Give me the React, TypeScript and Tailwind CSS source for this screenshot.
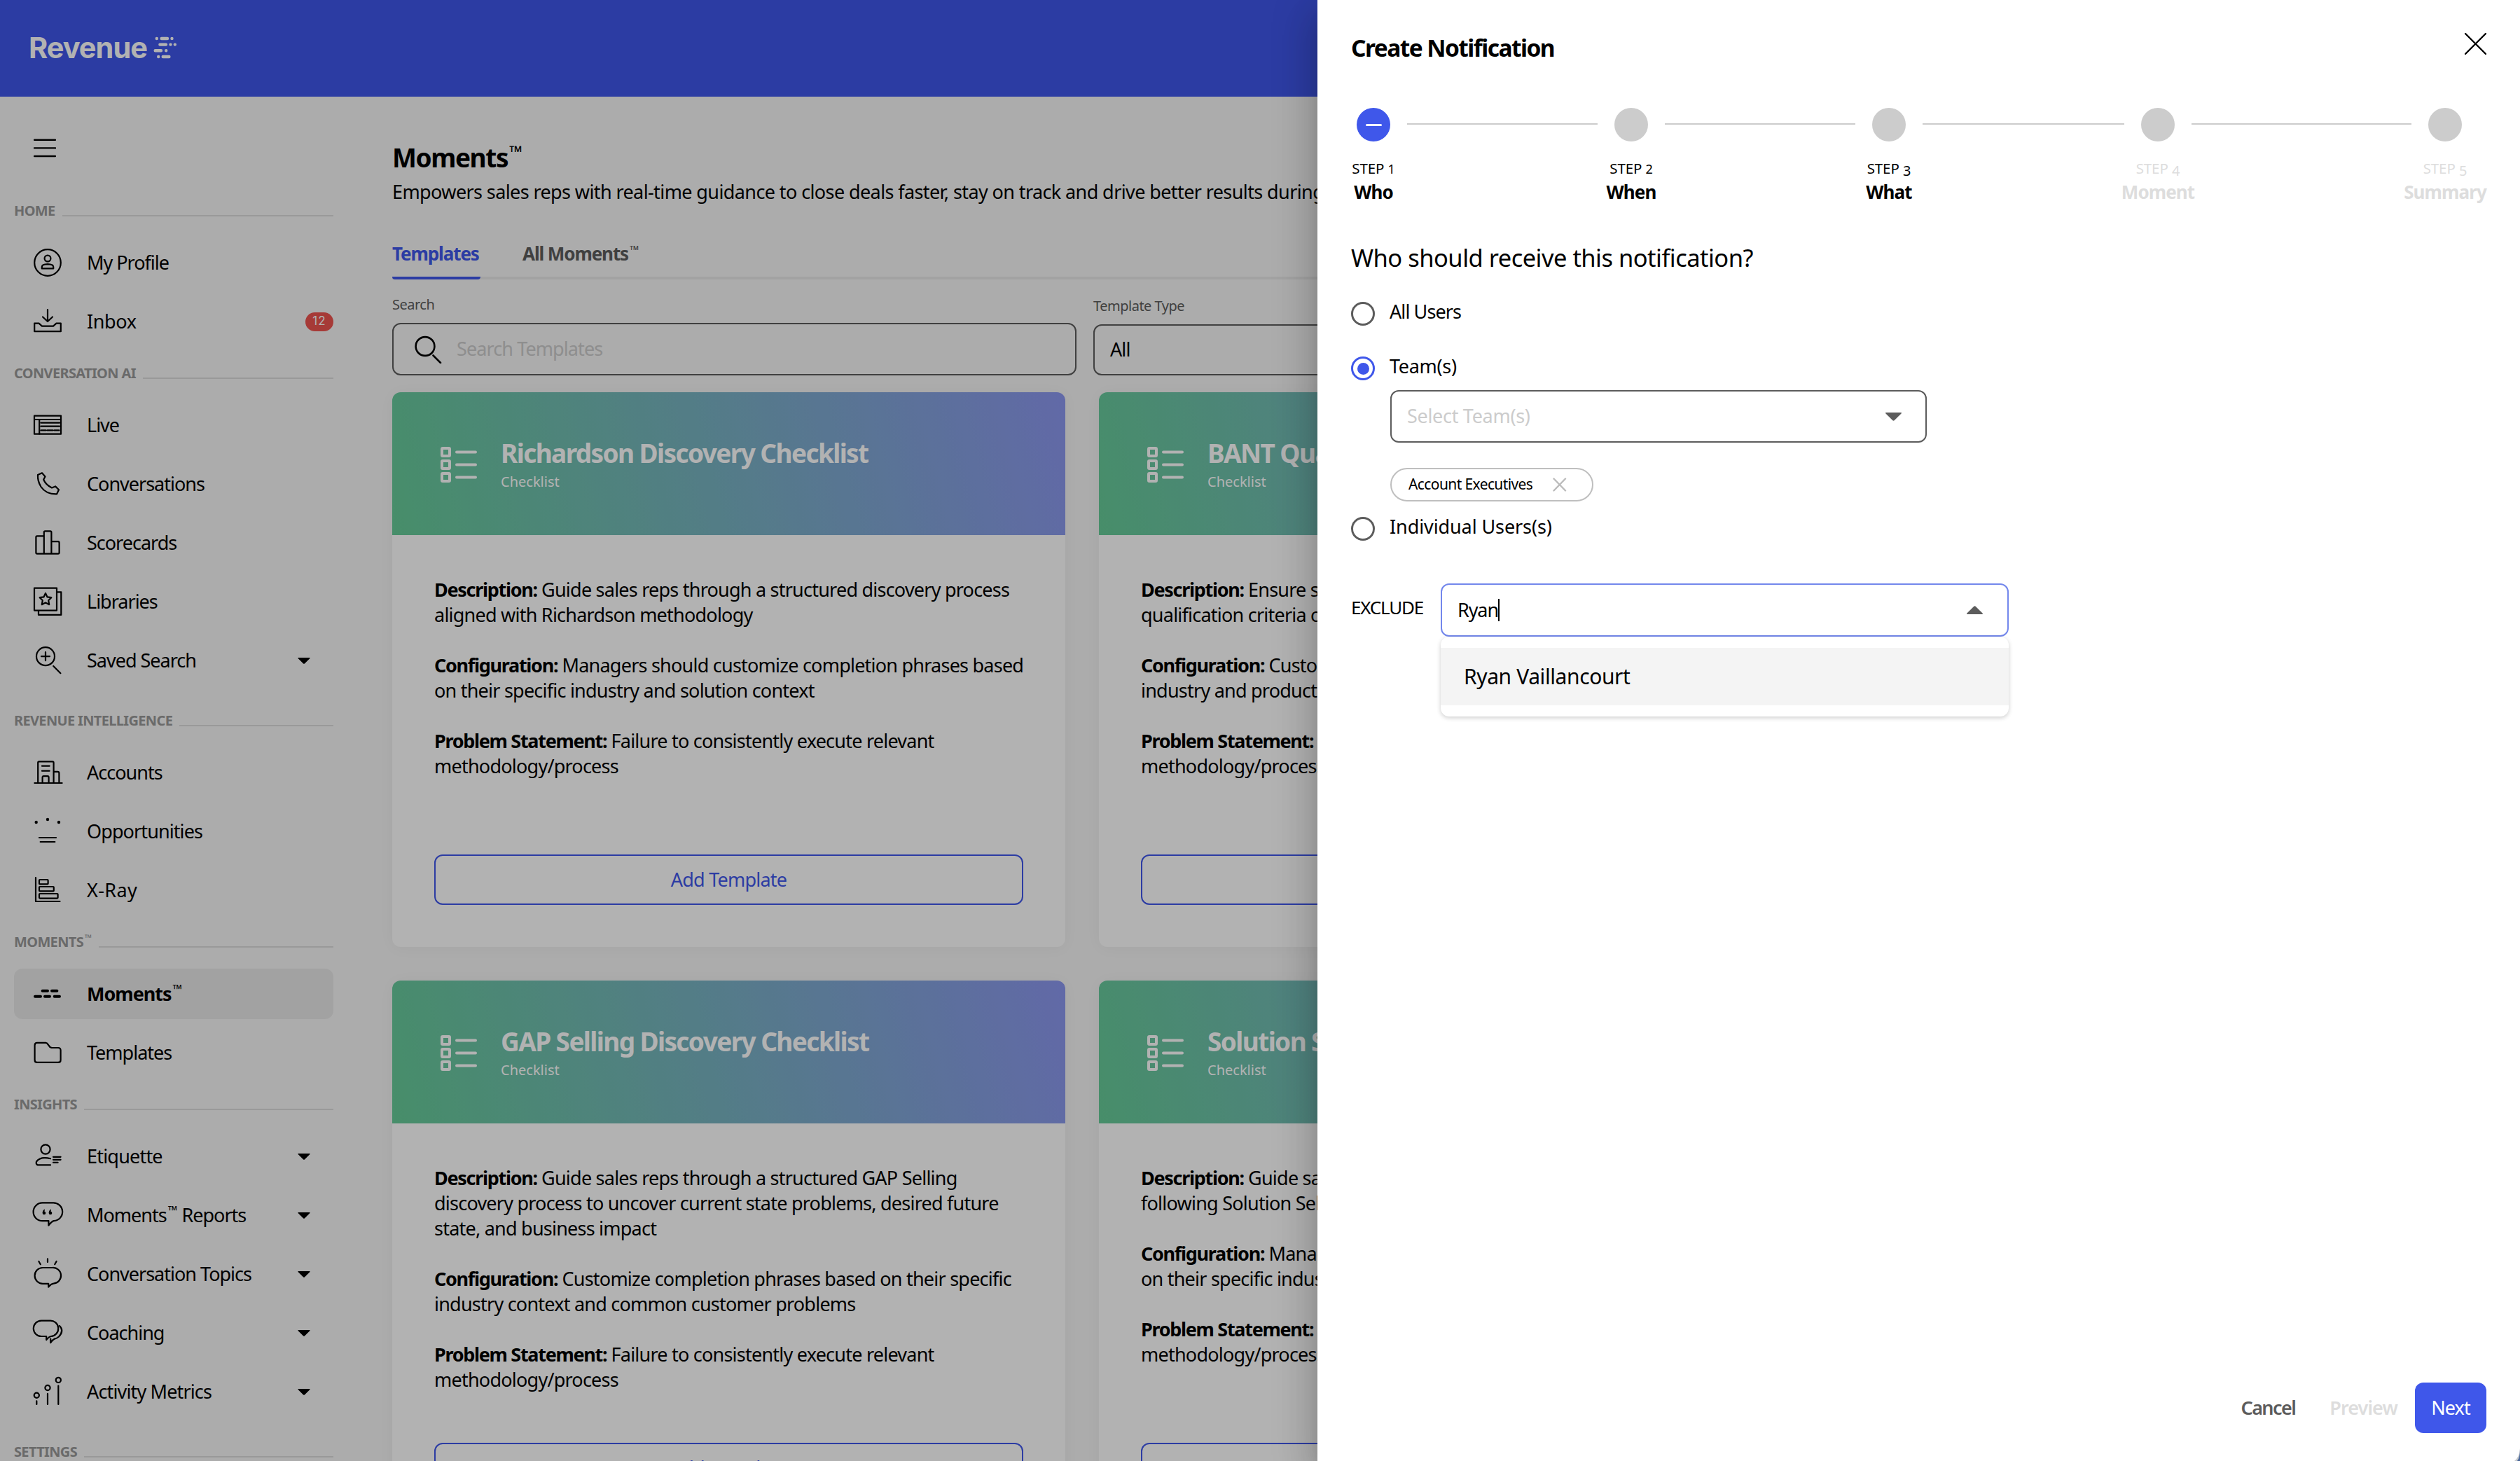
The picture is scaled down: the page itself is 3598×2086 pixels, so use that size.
import React from "react";
import clsx from "clsx";

interface NavEntry {
  label: string;
  icon: React.ReactNode;
  tm?: string;
  badge?: string;
  active?: boolean;
  expandable?: boolean;
  tracking?: string;
}

interface NavSection {
  title: string;
  tm?: boolean;
  items: NavEntry[];
}

const icons = {
  profile: (
    <>
      <circle cx="20" cy="20" r="18.8" />
      <circle cx="20" cy="14" r="4.4" />
      <path d="M11.8 28.4V26Q12 22.4 20 22.2Q28 22.4 28.2 26V28.4Z" />
    </>
  ),
  inbox: (
    <>
      <path d="M20 3V19.5M13 13.5L20 20L27 13.5" />
      <path d="M1.2 22.6H7.5L12 26.6H28L32.5 22.6H38.8V34.2H1.2Z" />
    </>
  ),
  live: (
    <>
      <rect x="1" y="6.7" width="38" height="26" />
      <path d="M1 12H39M8.2 12V32.5M10.5 16.7H37M10.5 21.7H37M10.5 27.4H17.5M19.5 27.4H27.5M29.5 27.4H36.5" />
    </>
  ),
  phone: <path d="M6 7L12 4.3L16.5 9.5L14.2 13.8Q17.5 21.5 26 25.4L31 23.4L36 28.2L33 34.4Q18 35 10.5 24Q5.5 16 6 7Z" />,
  scorecards: (
    <path d="M14.8 10.4H5Q3.4 10.4 3.4 12V34Q3.4 35.6 5 35.6H35Q36.6 35.6 36.6 34V20Q36.6 18.2 35 18.2H25.4M14.8 35.6V5Q14.8 3.3 16.4 3.3H23.8Q25.4 3.3 25.4 5V35.6" />
  ),
  libraries: (
    <>
      <rect x="1" y="0.6" width="32" height="32" />
      <path d="M33 6.3H39.3V38.9H7V33" />
      <path d="M17 8L19.6 13.4L25.3 14.2L21.2 18.3L22.2 24.2L17 21.4L11.8 24.2L12.8 18.3L8.7 14.2L14.4 13.4Z" />
    </>
  ),
  savedSearch: (
    <>
      <circle cx="17" cy="14.2" r="13" />
      <path d="M17 8.2V20.2M11 14.2H23M28.2 28L38.4 38.2" />
    </>
  ),
  accounts: (
    <path d="M6.2 35V6Q6.2 4.4 7.8 4.4H27Q28.6 4.4 28.6 6V35M28.6 18.8H34.4Q36.4 18.8 36.4 20.8V35M1.4 35H40.6M12 10.7H22.6M12 17.7H22.6M12.6 35V27Q12.6 25.2 14.4 25.2H20Q21.6 25.2 21.6 27V35" />
  ),
  opportunities: (
    <>
      <g fill="currentColor" stroke="none">
        <circle cx="3.7" cy="7" r="2.2" />
        <circle cx="20" cy="3" r="2.2" />
        <circle cx="36" cy="7" r="2.2" />
      </g>
      <path d="M8 29H32M9.7 35H30.3" />
    </>
  ),
  xray: (
    <>
      <path d="M3 2V36H37.5" />
      <rect x="8" y="5" width="12.6" height="6.4" rx="1" />
      <rect x="8" y="15" width="20.8" height="6.4" rx="1" />
      <rect x="8" y="25" width="26.6" height="6.6" rx="1" />
    </>
  ),
  moments: <path strokeWidth="4" d="M12.6 15.7H20M26 15.7H33.4M2 23.7H10M16 23.7H23M29.7 23.7H37" />,
  folder: <path d="M5 5.9H17.6L19.4 6.8L23.4 12L25.6 13H35Q38.6 13 38.6 16.6V30.4Q38.6 33.9 35 33.9H5Q1.6 33.9 1.6 30.4V9.4Q1.6 5.9 5 5.9Z" />,
  etiquette: (
    <>
      <circle cx="17" cy="10" r="6.6" />
      <path d="M24 23.2Q10 19.5 4 27.5Q3 31 5.5 32.4H24M28 20.8H38.6M28 24.8H38.6M28 28.8H34.6" />
    </>
  ),
  reports: (
    <>
      <path d="M12.5 2.4H27.5A12.8 12.8 0 0 1 29 28.2Q26 28.6 21.4 34.6V28.2H12.5A12.8 12.8 0 0 1 12.5 2.4Z" />
      <g fill="currentColor" stroke="none">
        <circle cx="15" cy="17" r="2.3" />
        <circle cx="24" cy="17" r="2.3" />
        <path d="M12.7 17Q12.7 12.8 16 11.4L15.4 15.5ZM21.7 17Q21.7 12.8 25 11.4L24.4 15.5Z" />
      </g>
    </>
  ),
  topics: (
    <path d="M13 11H27A11.3 11.3 0 0 1 28.5 33.6Q25 34 21.2 38.6V33.8H13A11.4 11.4 0 0 1 13 11ZM20 -1.6V3M7.4 2L9.8 6.2M32.6 2L30.2 6.2" />
  ),
  coaching: (
    <path d="M11 2.6H23A11.2 11.2 0 0 1 25 25Q22 25.4 18.2 30V25H11A11.2 11.2 0 0 1 11 2.6ZM37 10Q44 17 36 25.5Q33 28 30 28.6Q27 30 24.2 34V28.5" />
  ),
  metrics: (
    <>
      <circle cx="4.3" cy="25.3" r="3.6" />
      <circle cx="20" cy="14.5" r="3.6" />
      <circle cx="35.3" cy="3.4" r="3.6" />
      <path d="M4.3 33.4V38M20 22.8V38M35.3 11.6V38" />
    </>
  ),
};

const sections: NavSection[] = [
  {
    title: "HOME",
    items: [
      { label: "My Profile", icon: icons.profile },
      { label: "Inbox", icon: icons.inbox, badge: "12", tracking: "tracking-[-0.4px]" },
    ],
  },
  {
    title: "CONVERSATION AI",
    items: [
      { label: "Live", icon: icons.live },
      { label: "Conversations", icon: icons.phone },
      { label: "Scorecards", icon: icons.scorecards },
      { label: "Libraries", icon: icons.libraries },
      { label: "Saved Search", icon: icons.savedSearch, expandable: true },
    ],
  },
  {
    title: "REVENUE INTELLIGENCE",
    items: [
      { label: "Accounts", icon: icons.accounts },
      { label: "Opportunities", icon: icons.opportunities, tracking: "tracking-[-0.9px]" },
      { label: "X-Ray", icon: icons.xray, tracking: "tracking-[0.4px]" },
    ],
  },
  {
    title: "MOMENTS",
    tm: true,
    items: [
      { label: "Moments", tm: "", icon: icons.moments, active: true },
      { label: "Templates", icon: icons.folder },
    ],
  },
  {
    title: "INSIGHTS",
    items: [
      { label: "Etiquette", icon: icons.etiquette, expandable: true, tracking: "tracking-[-0.8px]" },
      { label: "Moments", tm: " Reports", icon: icons.reports, expandable: true },
      { label: "Conversation Topics", icon: icons.topics, expandable: true },
      { label: "Coaching", icon: icons.coaching, expandable: true },
      { label: "Activity Metrics", icon: icons.metrics, expandable: true, tracking: "tracking-[-0.85px]" },
    ],
  },
  { title: "SETTINGS", items: [] },
];

const templates = [
  {
    title: "Richardson Discovery Checklist",
    description: ["Guide sales reps through a structured discovery process", "aligned with Richardson methodology"],
    configuration: ["Managers should customize completion phrases based", "on their specific industry and solution context"],
  },
  {
    title: "BANT Qualification Checklist",
    description: ["Ensure sales reps uncover key", "qualification criteria on every call"],
    configuration: ["Customize completion phrases for", "industry and product context"],
  },
  {
    title: "GAP Selling Discovery Checklist",
    description: [
      "Guide sales reps through a structured GAP Selling",
      "discovery process to uncover current state problems, desired future",
      "state, and business impact",
    ],
    configuration: ["Customize completion phrases based on their specific", "industry context and common customer problems"],
  },
  {
    title: "Solution Selling Checklist",
    description: ["Guide sales reps through discovery", "following Solution Selling methodology"],
    configuration: ["Managers should customize phrases", "on their specific industry context"],
  },
];

const problem = ["Failure to consistently execute relevant", "methodology/process"];

function Tm() {
  return <span className="ml-[2px] text-[0.66em] leading-[0] align-[0.55em] tracking-normal">™</span>;
}

function Caret({ className }: { className?: string }) {
  return (
    <svg className={className} viewBox="0 0 20 10" fill="currentColor">
      <path d="M1 0H19Q20 0.4 19.4 1L11 9.4Q10 10 9 9.4L0.6 1Q0 0.4 1 0Z" />
    </svg>
  );
}

function NavRow({ item }: { item: NavEntry }) {
  return (
    <div
      className={clsx(
        "flex h-[72px] items-center rounded-xl pl-7 text-[27px]",
        item.tracking ?? "tracking-[-1px]",
        item.active && "bg-[#e9e9e9] font-bold",
      )}
    >
      <svg
        className="mr-9 h-10 w-10 shrink-0 overflow-visible"
        viewBox="0 0 40 40"
        fill="none"
        stroke="currentColor"
        strokeWidth="2.2"
        strokeLinecap="round"
        strokeLinejoin="round"
      >
        {item.icon}
      </svg>
      <span className="whitespace-pre">
        {item.label}
        {item.tm !== undefined && <Tm />}
        {item.tm}
      </span>
      {item.badge && (
        <span className="ml-auto flex h-[27px] w-10 items-center justify-center rounded-full bg-[#ee5350] font-['Inter',sans-serif] text-[17px] tracking-[1.2px] text-white">
          {item.badge}
        </span>
      )}
      {item.expandable && <Caret className="mr-[32px] ml-auto h-[9px] w-5" />}
    </div>
  );
}

function Sidebar() {
  return (
    <aside className="w-[496px] shrink-0 px-5 pt-[60px]">
      <svg className="ml-7 block h-7 w-8" viewBox="0 0 32 28" stroke="#000" strokeWidth="2.4" strokeLinecap="round">
        <path d="M1 1.8H31M1 13.4H31M1 25H31" />
      </svg>
      <div className="pt-[37px]">
        {sections.map((section) => (
          <div key={section.title} className="pt-[23.5px]">
            <div className="mb-[24.5px] flex h-7 items-center">
              <span className="text-[20px] font-bold tracking-[-0.65px] whitespace-nowrap text-[#999]">
                {section.title}
                {section.tm && <Tm />}
              </span>
              <div className="ml-[10px] h-[2px] flex-1 translate-y-[7px] bg-[#dcdcdc]" />
            </div>
            <div className={clsx("flex flex-col gap-3", section.items.some((i) => i.expandable) && "pb-3")}>
              {section.items.map((item) => (
                <NavRow key={item.label + (item.tm ?? "")} item={item} />
              ))}
            </div>
          </div>
        ))}
      </div>
    </aside>
  );
}

function Section({ name, lines }: { name: string; lines: string[] }) {
  return (
    <div className="mb-9">
      <span className="font-bold tracking-[-1.3px]">{name}:</span>{" "}
      {lines.map((line, idx) => (
        <React.Fragment key={idx}>
          {idx > 0 && <br />}
          {line}
        </React.Fragment>
      ))}
    </div>
  );
}

function TemplateCard({ template }: { template: (typeof templates)[number] }) {
  return (
    <div className="flex h-[792px] w-[961px] flex-col overflow-hidden rounded-xl bg-white shadow-[0_2px_24px_rgba(0,0,0,0.03)]">
      <div className="flex h-[204px] shrink-0 items-start bg-[linear-gradient(75deg,#66cc98,#8c97f0)] pl-[69px] text-white">
        <svg className="mt-[78px] h-[52px] w-[54px]" viewBox="0 0 54 52" fill="none" stroke="currentColor" strokeWidth="4">
          <rect x="2" y="2" width="11" height="11" rx="1" />
          <rect x="2" y="20" width="11" height="11" rx="1" />
          <rect x="2" y="38" width="11" height="11" rx="1" />
          <path strokeLinecap="round" d="M23 7.5H50M23 25.5H50M23 43.5H50" />
        </svg>
        <div className="mt-16 ml-[32px] whitespace-nowrap">
          <div className="h-12 text-[37px] leading-[46px] font-bold tracking-[-1.6px]">{template.title}</div>
          <div className="mt-px text-[20px] leading-[30px]">Checklist</div>
        </div>
      </div>
      <div className="flex flex-1 flex-col p-[60px] text-[27px] leading-9 tracking-[-0.77px] whitespace-nowrap">
        <Section name="Description" lines={template.description} />
        <Section name="Configuration" lines={template.configuration} />
        <Section name="Problem Statement" lines={problem} />
        <button className="mt-auto h-[72px] w-[841px] shrink-0 rounded-xl border-2 border-[#3f57ea] text-[#3f57ea]">Add Template</button>
      </div>
    </div>
  );
}

function Main() {
  return (
    <main className="ml-16 w-[1970px] shrink-0 pt-[63px]">
      <h1 className="h-12 text-[37px] leading-[48px] font-bold tracking-[-1.4px]">
        Moments
        <Tm />
      </h1>
      <p className="mt-[5px] h-10 text-[27px] leading-10 tracking-[-0.6px] whitespace-nowrap">
        Empowers sales reps with real-time guidance to close deals faster, stay on track and drive better results during every call.
      </p>
      <div className="mt-[47px] flex h-[58px] gap-[60px] border-b-4 border-[#e9e9e9] text-[26px] leading-[42px] font-bold tracking-[-1.1px]">
        <div className="h-[58px] w-[126px] shrink-0 rounded-b-sm border-b-4 border-[#3f57ea] text-[#3f57ea]">Templates</div>
        <div className="text-[#5c5c5c]">
          All Moments
          <Tm />
        </div>
      </div>
      <div className="mt-[22px] flex items-end gap-6 text-[20px] tracking-[-0.5px] text-[#5c5c5c]">
        <div className="w-[977px]">
          <div className="h-7 leading-7">Search</div>
          <div className="mt-3 flex h-[75px] items-center rounded-xl border-2 border-[#5c5c5c] pl-[30px] text-[27px] tracking-[-0.9px] text-[#ccc]">
            <svg className="mr-[20px] h-10 w-10" viewBox="0 0 40 40" fill="none" stroke="#000" strokeWidth="2.6" strokeLinecap="round">
              <circle cx="15" cy="15.5" r="13.4" />
              <path d="M26.5 28.5L37 39" />
            </svg>
            Search Templates
          </div>
        </div>
        <div className="flex-1">
          <div className="h-7 leading-7">Template Type</div>
          <div className="mt-3 flex h-[73px] items-center rounded-xl border-2 border-[#5c5c5c] pl-[22px] text-[27px] tracking-[-0.9px] text-black">All</div>
        </div>
      </div>
      <div className="mt-6 flex flex-wrap gap-12">
        {templates.map((t) => (
          <TemplateCard key={t.title} template={t} />
        ))}
      </div>
    </main>
  );
}

const steps = [
  { n: "1", label: "Who", line: "w-[272px]", digit: "text-[18px]" },
  { n: "2", label: "When", line: "w-[272px]", digit: "text-[18px]" },
  { n: "3", label: "What", line: "w-[288px]", digit: "text-[20px] align-[-3px]" },
  { n: "4", label: "Moment", line: "w-[314px]", digit: "text-[20px] align-[-3px]", disabled: true },
  { n: "5", label: "Summary", digit: "text-[20px] align-[-3px]", disabled: true },
];

function Stepper() {
  return (
    <div className="mt-[63px] flex pl-8">
      {steps.map((step, idx) => (
        <React.Fragment key={step.n}>
          <div className={clsx("flex w-24 shrink-0 flex-col items-center whitespace-nowrap", step.disabled && "text-[#ddd]")}>
            <div className={clsx("flex h-12 w-12 items-center justify-center rounded-full", idx === 0 ? "bg-[#3f57ea]" : "bg-[#ccc]")}>
              {idx === 0 && <div className="h-[3px] w-[23px] rounded-full bg-white" />}
            </div>
            <div className="mt-6 h-7 text-[20.5px] leading-7 tracking-[-0.1px]">
              STEP <span className={clsx("leading-[0]", step.digit)}>{step.n}</span>
            </div>
            <div className="mt-[2px] h-9 text-[26px] leading-9 font-bold tracking-[-0.9px]">{step.label}</div>
          </div>
          {step.line && <div className={clsx("mt-[22px] h-[2px] bg-[#ccc]", step.line)} />}
        </React.Fragment>
      ))}
    </div>
  );
}

interface RadioRowProps {
  label: string;
  checked?: boolean;
  tracking: string;
}

function RadioRow({ label, checked, tracking }: RadioRowProps) {
  return (
    <div className={clsx("flex h-9 items-center text-[27px]", tracking)}>
      <div
        className={clsx(
          "mr-[21px] flex h-[34px] w-[34px] translate-y-px items-center justify-center rounded-full border-[3.5px]",
          checked ? "border-[#3f57ea]" : "border-[#5c5c5c]",
        )}
      >
        {checked && <div className="h-[17px] w-[17px] rounded-full bg-[#3f57ea]" />}
      </div>
      <span className="-translate-y-[2px]">{label}</span>
    </div>
  );
}

function Drawer() {
  return (
    <div className="absolute inset-y-0 right-0 flex w-[1717px] flex-col bg-white shadow-[0_16px_20px_-10px_rgba(0,0,0,0.2),0_32px_48px_4px_rgba(0,0,0,0.14),0_12px_60px_10px_rgba(0,0,0,0.12)]">
      <div className="flex items-start justify-between pt-[45px] pr-12 pl-12">
        <h2 className="h-[46px] text-[33.5px] leading-[46px] font-bold tracking-[-1.55px]">Create Notification</h2>
        <svg className="mt-[2px] h-[31px] w-[31px]" viewBox="0 0 31 31" stroke="#000" strokeWidth="2.4" strokeLinecap="round">
          <path d="M1 1L30 30M30 1L1 30" />
        </svg>
      </div>

      <Stepper />

      <div className="mt-[52px] flex flex-col items-start pl-12">
        <h3 className="h-12 text-[34.5px] leading-[48px] tracking-[-0.52px]">Who should receive this notification?</h3>
        <div className="mt-[37px] flex flex-col">
          <RadioRow label="All Users" tracking="tracking-[-0.9px]" />
          <div className="h-[42px]" />
          <RadioRow label="Team(s)" tracking="tracking-[-0.3px]" checked />
          <div className="mt-[14px] ml-[56px] flex h-[75px] w-[766px] items-center justify-between rounded-xl border-2 border-[#5c5c5c] pr-[33px] pl-[22px] text-[27px] tracking-[-0.3px] text-[#ccc]">
            Select Team(s)
            <Caret className="h-[12px] w-[25px] text-[#5c5c5c]" />
          </div>
          <div className="mt-9 ml-[56px] flex h-12 w-[290px] items-center rounded-full border-2 border-[#bfbfbf] pl-6 text-[21px] tracking-[-0.6px] whitespace-nowrap">
            Account Executives
            <svg className="ml-[29px] h-5 w-5" viewBox="0 0 20 20" stroke="#bbb" strokeWidth="2.4" strokeLinecap="round">
              <path d="M1.5 1.5L18 18.5M18 1.5L1.5 18.5" />
            </svg>
          </div>
          <div className="h-[20px]" />
          <RadioRow label="Individual Users(s)" tracking="tracking-[-0.1px]" />
        </div>

        <div className="mt-[61px] flex items-start">
          <span className="mt-[14px] w-[128px] text-[26px] leading-10 tracking-[-1.2px]">EXCLUDE</span>
          <div className="w-[811px]">
            <div className="flex h-[76px] items-center justify-between rounded-xl border-2 border-[#7387ec] pr-[34px] pl-[22px] text-[27px] tracking-[-1.1px]">
              <span className="flex items-center">
                Ryan
                <span className="h-8 w-[2px] bg-black" />
              </span>
              <Caret className="h-[12px] w-[25px] rotate-180 text-[#5c5c5c]" />
            </div>
            <div className="rounded-xl bg-white py-4 shadow-[0_2px_6px_rgba(0,0,0,0.2)]">
              <div className="h-[82px] bg-[#f4f4f4] pl-[33px] text-[30px] leading-[82px] tracking-[-0.4px]">Ryan Vaillancourt</div>
            </div>
          </div>
        </div>
      </div>

      <div className="mt-auto flex items-center justify-end pr-12 pb-10 text-[27px] font-semibold tracking-[-0.9px]">
        <span className="tracking-[-1.6px] text-[#5c5c5c]">Cancel</span>
        <span className="ml-[49px] text-[#ddd]">Preview</span>
        <button className="ml-[25px] h-[72px] w-[102px] rounded-xl bg-[#3f57ea] font-normal text-white">Next</button>
      </div>

      {/* rounded window corner */}
      <svg className="absolute right-0 bottom-0 h-5 w-2" viewBox="0 0 8 20">
        <path d="M8 2Q7.5 14 0 20H8Z" fill="#c4c8cc" />
        <path d="M8 4Q8 15 4 20H8Z" fill="#48669a" />
      </svg>
    </div>
  );
}

export default function App() {
  return (
    <div className="relative h-[2086px] w-[3598px] overflow-hidden bg-[#f6f6f6] font-['Noto_Sans',sans-serif] text-black">
      <header className="flex h-[138px] items-center bg-[#3f57ea] pl-[41px] text-white">
        <span className="-mt-[1px] font-['Inter',sans-serif] text-[41.5px] leading-none font-bold tracking-[-1px]">Revenue</span>
        <svg className="-mt-[3px] ml-[9px] h-8 w-[34px]" viewBox="0 0 34 32" stroke="currentColor" strokeWidth="4.4" strokeLinecap="round">
          <path d="M4.8 3H4.81M11.7 3H20M26.5 3H26.51M9.4 11.6H18M24.5 11.6H24.51M30.8 11.6H30.81M2.7 20.2H11M18.2 20.2H18.21M7.2 29H7.21M13.7 29H22.4" />
        </svg>
      </header>
      <div className="flex">
        <Sidebar />
        <Main />
      </div>
      <div className="absolute inset-0 bg-black/30" />
      <Drawer />
    </div>
  );
}
